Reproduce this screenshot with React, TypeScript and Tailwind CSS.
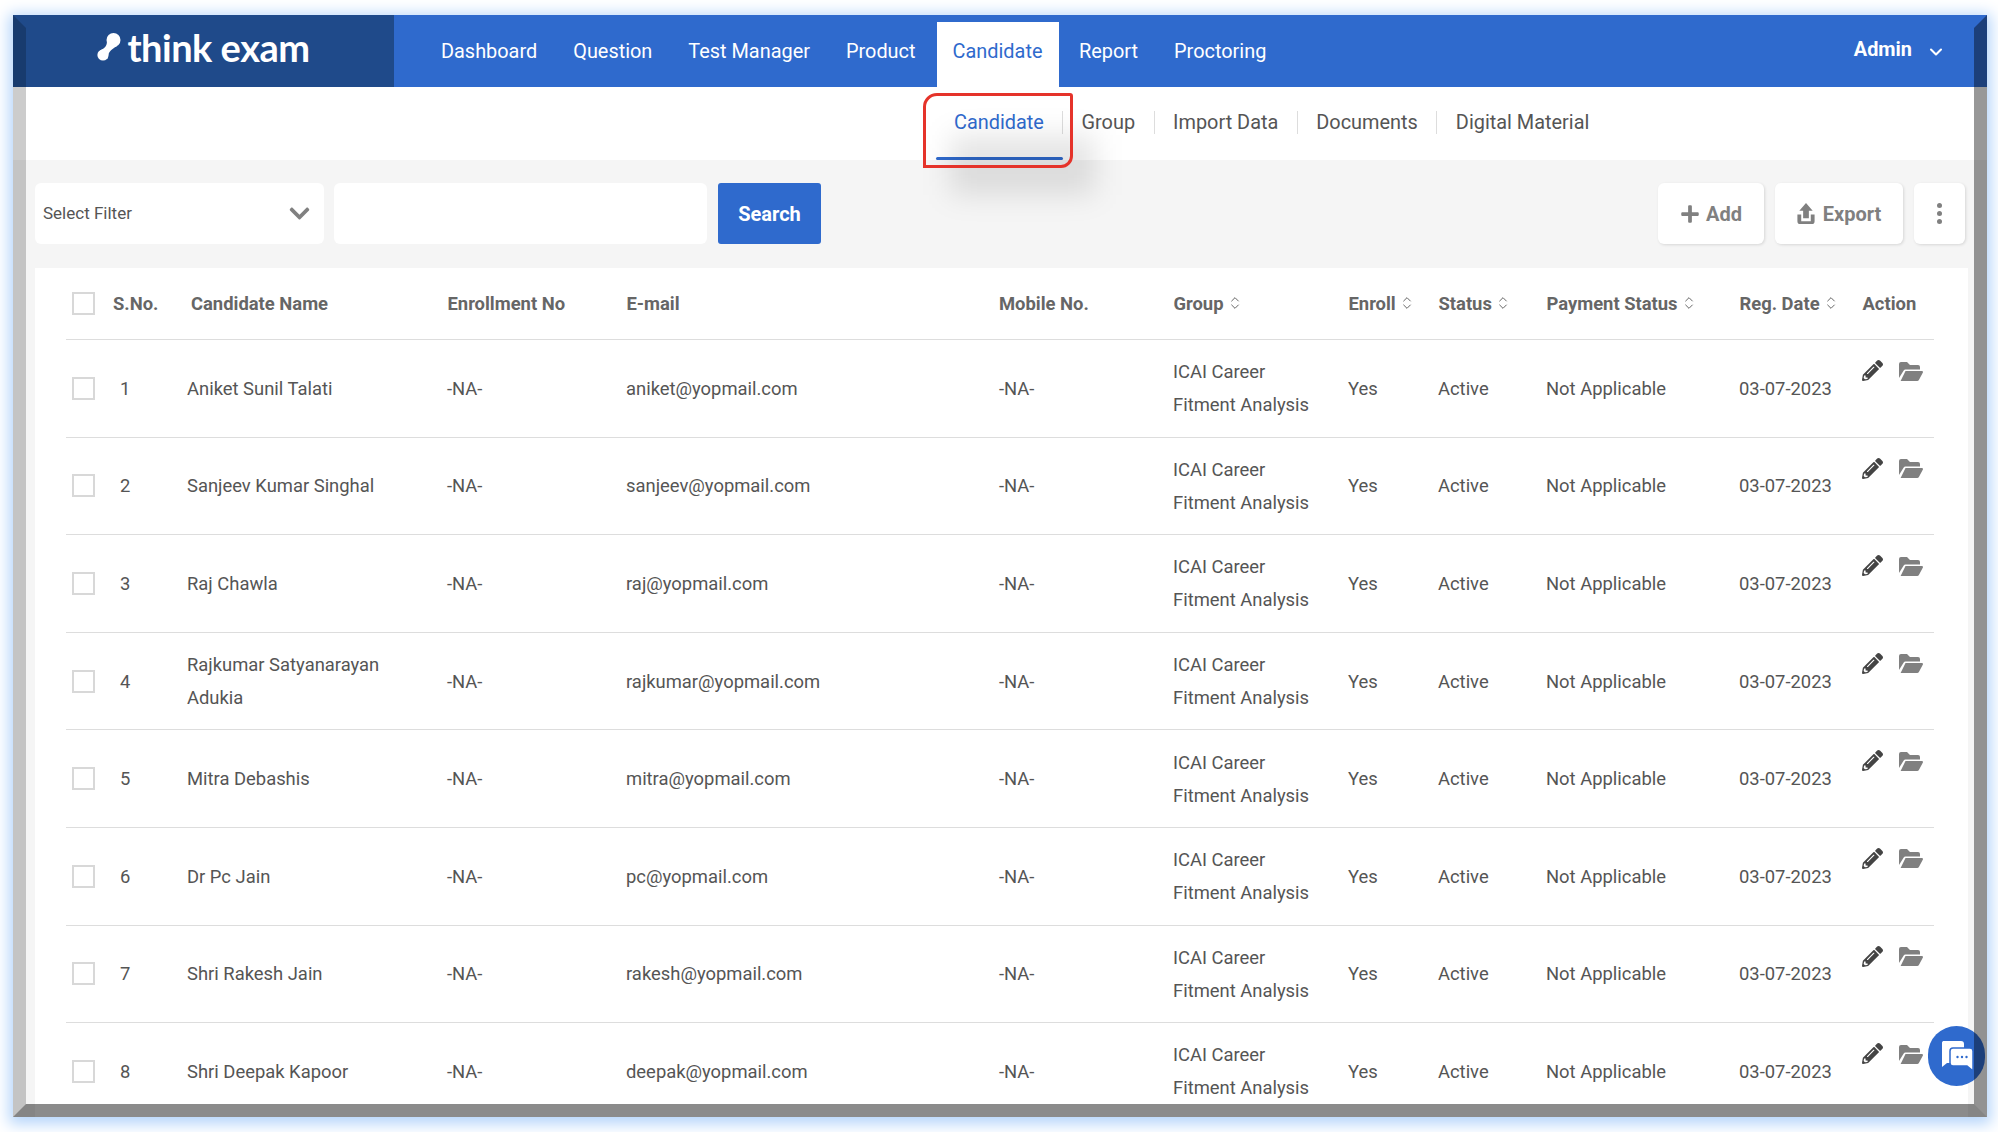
import { FaChevronDown, FaPencilAlt, FaPlus } from "react-icons/fa";
import { ChevronDown, ChevronsUpDown } from "lucide-react";

const navItems = ["Dashboard", "Question", "Test Manager", "Product", "Candidate", "Report", "Proctoring"];
const subItems = ["Candidate", "Group", "Import Data", "Documents", "Digital Material"];

const candidates = [
  { name: "Aniket Sunil Talati", email: "aniket@yopmail.com" },
  { name: "Sanjeev Kumar Singhal", email: "sanjeev@yopmail.com" },
  { name: "Raj Chawla", email: "raj@yopmail.com" },
  { name: "Rajkumar Satyanarayan Adukia", email: "rajkumar@yopmail.com" },
  { name: "Mitra Debashis", email: "mitra@yopmail.com" },
  { name: "Dr Pc Jain", email: "pc@yopmail.com" },
  { name: "Shri Rakesh Jain", email: "rakesh@yopmail.com" },
  { name: "Shri Deepak Kapoor", email: "deepak@yopmail.com" },
];

const columns = "grid grid-cols-[47px_74px_260px_179px_373px_174px_175px_90px_108px_193px_123px_72px] items-center";

const Checkbox = () => <div className="ml-[6px] h-[23px] w-[23px] border-2 border-[#d8d8d8] bg-white" />;

const SortLabel = ({ label }: { label: string }) => (
  <div className="flex items-center gap-[3px] pl-[0.5px]">
    {label}
    <ChevronsUpDown className="h-[16px] w-[16px] text-[#666]" strokeWidth={1.5} />
  </div>
);

const FolderIcon = () => (
  <svg viewBox="0 0 24 20" className="h-[20px] w-[24px]" fill="#808080">
    <path d="M0 3a2 2 0 0 1 2-2h6l3 3h8a2 2 0 0 1 2 2v2.5H6.5a2 2 0 0 0-1.8 1L0 17z" />
    <path d="M6.5 10H23a1 1 0 0 1 .9 1.5l-4 7.5a2 2 0 0 1-1.7 1H1.6z" />
  </svg>
);

const Logo = () => (
  <div className="flex items-center">
    <svg viewBox="0 0 24 28" className="mr-[6px] h-[28px] w-[24px]" fill="#fff">
      <circle cx="16.5" cy="7" r="7" />
      <circle cx="6" cy="22" r="5.6" />
      <path d="M10 8 C10 13 8 15 3 17.5 L10.5 26 C11 20 13 17 20 13 Z" />
    </svg>
    <span className="font-['Lato',sans-serif] text-[38px] font-bold leading-none tracking-[-0.5px] text-white">think exam</span>
  </div>
);

const ChatBubble = () => (
  <div className="absolute left-[1928px] top-[1026px] flex h-[60px] w-[57px] items-center justify-center rounded-full bg-[#2f6acd]">
    <svg viewBox="0 0 33 30" className="h-[30px] w-[33px]">
      <path d="M3 0h18a3 3 0 0 1 3 3v16a3 3 0 0 1-3 3H7l-5 4V3a3 3 0 0 1 1-3z" fill="#fff" />
      <path d="M13 7h17a3 3 0 0 1 3 3v20l-6-5H13a3 3 0 0 1-3-3V10a3 3 0 0 1 3-3z" fill="#fff" stroke="#2f6acd" strokeWidth="1.5" />
      <circle cx="17.5" cy="16" r="1.2" fill="#2f6acd" />
      <circle cx="22" cy="16" r="1.2" fill="#2f6acd" />
      <circle cx="26.5" cy="16" r="1.2" fill="#2f6acd" />
    </svg>
  </div>
);

export default function App() {
  return (
    <div className="relative h-[1132px] w-[1998px] overflow-hidden bg-white font-['Roboto',sans-serif]">
      <div className="absolute left-[13px] top-[15px] h-[1102px] w-[1974px] overflow-hidden bg-[#f5f5f5] shadow-[0_3px_14px_4px_#b5d5fb]">
        {/* Top bar */}
        <div className="flex h-[72px] bg-[#2f6acd] text-[19.9px] text-white">
          <div className="flex w-[381px] items-center justify-center bg-[#1f4a8a] pb-[8px]">
            <Logo />
          </div>
          <nav className="ml-[29px] flex flex-1 items-end">
            {navItems.map((item) =>
              item === "Candidate" ? (
                <div key={item} className="ml-[3px] mr-[2.5px] flex h-[65px] w-[122px] items-center justify-center bg-white pb-[6px] text-[#2f6acd]">
                  {item}
                </div>
              ) : (
                <div key={item} className="flex h-[65px] items-center px-[18px] pb-[6px]">
                  {item}
                </div>
              ),
            )}
          </nav>
          <div className="flex items-center pr-[41px] pb-[2px] font-bold">
            Admin
            <ChevronDown className="ml-[14px] mt-[3px] h-[20px] w-[20px]" strokeWidth={2.5} />
          </div>
        </div>

        {/* Sub navigation */}
        <div className="flex h-[73px] items-start bg-white pl-[923px] text-[19.9px] text-[#555]">
          {subItems.map((item, i) =>
            i === 0 ? (
              <div key={item} className="relative h-[73px] w-[126px] pl-[18px] pt-[24px] leading-[24px] text-[#2f6acd]">
                {item}
                <div className="absolute bottom-0 left-0 right-[-1px] h-[3px] rounded-full bg-[#2f6acd]" />
              </div>
            ) : (
              <div key={item} className="mt-[24px] flex h-[23px] items-center border-l border-[#ddd] px-[18.5px]">
                {item}
              </div>
            ),
          )}
        </div>

        {/* Filter bar */}
        <div className="flex h-[108px] items-center pl-[22px] pr-[22px] pb-[1px]">
          <div className="flex h-[61px] w-[289px] items-center justify-between rounded-md bg-white pl-[8px] pr-[13px] text-[17px] text-[#555]">
            Select Filter
            <FaChevronDown className="h-[23px] w-[23px] text-[#808080]" />
          </div>
          <div className="ml-[10px] h-[61px] w-[373px] rounded-md bg-white" />
          <button className="ml-[11px] h-[61px] w-[103px] rounded-[3px] bg-[#2f6acd] text-[20px] font-bold text-white">Search</button>
          <div className="ml-auto flex gap-[11px] text-[20px] font-bold text-[#808080]">
            <div className="flex h-[61px] w-[106px] items-center justify-center gap-[6px] rounded-md bg-white shadow-[1px_1px_3px_rgba(0,0,0,0.12)]">
              <FaPlus className="h-[20px] w-[20px]" />
              Add
            </div>
            <div className="flex h-[61px] w-[128px] items-center justify-center gap-[8px] rounded-md bg-white shadow-[1px_1px_3px_rgba(0,0,0,0.12)]">
              <svg viewBox="0 0 18 22" className="h-[21px] w-[18px]" fill="#808080">
                <path d="M9 0l7 8h-4v8H6V8H2z" />
                <path d="M0 12h4v7h10v-7h4v7a3 3 0 0 1-3 3H3a3 3 0 0 1-3-3z" />
              </svg>
              Export
            </div>
            <div className="flex h-[61px] w-[51px] flex-col items-center justify-center gap-[3px] rounded-md bg-white shadow-[1px_1px_3px_rgba(0,0,0,0.12)]">
              <span className="h-[5px] w-[5px] rounded-full bg-[#808080]" />
              <span className="h-[5px] w-[5px] rounded-full bg-[#808080]" />
              <span className="h-[5px] w-[5px] rounded-full bg-[#808080]" />
            </div>
          </div>
        </div>

        {/* Candidates table */}
        <div className="ml-[22px] w-[1933px] bg-white pl-[31px] text-[18.4px] text-[#555]">
          <div className={`${columns} h-[72px] w-[1868px] border-b border-[#ddd] font-bold text-[#666]`}>
            <Checkbox />
            <div>S.No.</div>
            <div className="pl-[4px]">Candidate Name</div>
            <div className="pl-[0.5px]">Enrollment No</div>
            <div className="pl-[0.5px]">E-mail</div>
            <div>Mobile No.</div>
            <SortLabel label="Group" />
            <SortLabel label="Enroll" />
            <SortLabel label="Status" />
            <SortLabel label="Payment Status" />
            <SortLabel label="Reg. Date" />
            <div className="pl-[0.5px]">Action</div>
          </div>
          {candidates.map((c, i) => (
            <div key={c.email} className={`${columns} h-[97.6px] w-[1868px] border-b border-[#ddd] leading-[33px]`}>
              <Checkbox />
              <div className="pl-[7px]">{i + 1}</div>
              <div className="pr-[40px]">{c.name}</div>
              <div>-NA-</div>
              <div>{c.email}</div>
              <div>-NA-</div>
              <div>
                ICAI Career
                <br />
                Fitment Analysis
              </div>
              <div>Yes</div>
              <div>Active</div>
              <div>Not Applicable</div>
              <div>03-07-2023</div>
              <div className="flex items-center gap-[16px] self-start pt-[20px]">
                <FaPencilAlt className="h-[21px] w-[21px] text-[#444]" />
                <FolderIcon />
              </div>
            </div>
          ))}
        </div>
      </div>

      <ChatBubble />

      {/* Red highlight around the active sub tab */}
      <div className="absolute left-[950px] top-[135px] h-[60px] w-[145px] bg-black/10 blur-[14px]" />
      <div className="absolute left-[923px] top-[93px] h-[75px] w-[150px] rounded-tl-[14px] rounded-tr-[3px] rounded-br-[12px] border-[3px] border-[#e5332a]" />

      {/* Bevelled frame */}
      <div className="pointer-events-none absolute left-[13px] top-[15px] h-[1102px] w-[1974px] border-[13px] border-t-transparent border-r-black/40 border-b-black/45 border-l-black/20" />
    </div>
  );
}
